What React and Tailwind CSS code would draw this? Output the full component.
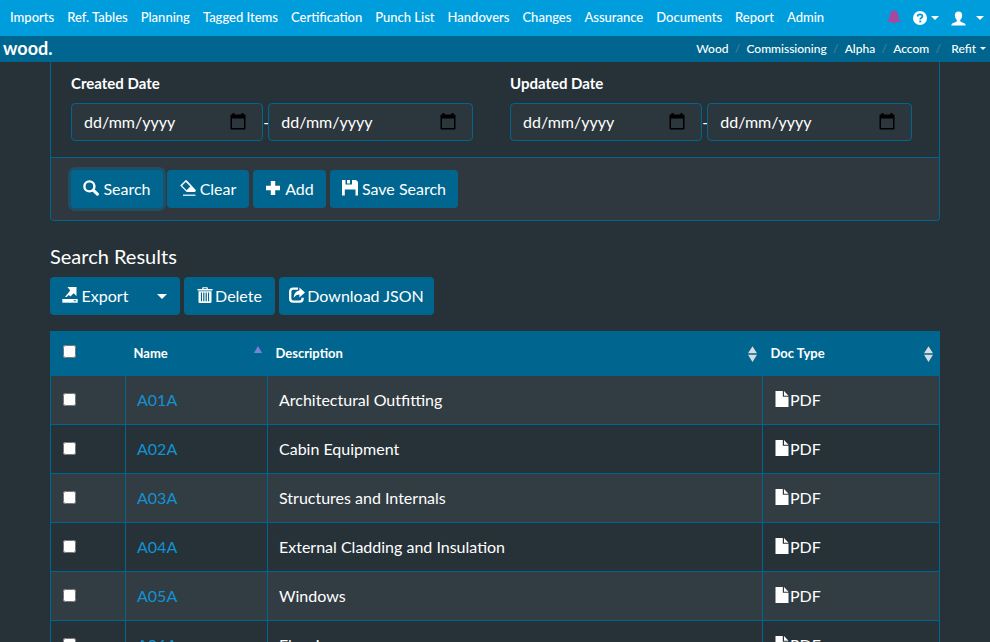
const menu = ['Imports', 'Ref. Tables', 'Planning', 'Tagged Items', 'Certification', 'Punch List', 'Handovers', 'Changes', 'Assurance', 'Documents', 'Report', 'Admin'];
const crumbs = ['Wood', 'Commissioning', 'Alpha', 'Accom'];
const rows = [
  ['A01A', 'Architectural Outfitting'],
  ['A02A', 'Cabin Equipment'],
  ['A03A', 'Structures and Internals'],
  ['A04A', 'External Cladding and Insulation'],
  ['A05A', 'Windows'],
  ['A06A', 'Flooring'],
];

function Icon({ children, className = 'size-4' }) {
  return (
    <svg viewBox="0 0 16 16" fill="currentColor" aria-hidden="true" className={`shrink-0 ${className}`}>
      {children}
    </svg>
  );
}

const SearchIcon = () => (
  <Icon className="size-4 -translate-y-px">
    <circle cx="6.4" cy="6.4" r="5" fill="none" stroke="currentColor" strokeWidth="2.4" />
    <path d="M10.2 10.2L14.4 14.2" stroke="currentColor" strokeWidth="3" strokeLinecap="round" />
  </Icon>
);
const EraserIcon = () => (
  <Icon className="size-4 -translate-y-px">
    <path d="M5.500.200L.200 5.500l6.500 6.500H14.400Q16.600 11.700 15.500 9.700L6.900.500Q6.200-.300 5.500.200zM5.800 1.900L10.300 6.400 6.600 10.200 2.100 5.700z" fillRule="evenodd" />
    <path d="M3 14.600h12.500v1.200H3z" />
  </Icon>
);
const PlusIcon = () => (
  <Icon className="size-4 -translate-y-px">
    <path d="M5.800 1h4.400v4.800H15v4.400h-4.800V15H5.800v-4.800H1V5.800h4.800z" />
  </Icon>
);
const SaveIcon = () => (
  <Icon className="size-4 -translate-y-px">
    <path d="M0 0H3.500V5H12V0H14L16 2V15.500H13.500V9H2.800V15.500H0z" />
    <path d="M5 0H8V3.500H5zM10 0H12.500V5H10zM2 4.500H14V9.500H2z" />
  </Icon>
);
const ExportIcon = () => (
  <Icon className="size-4 -translate-y-px">
    <path d="M5.500 0h9V8.900l-2.900-2.600-3.100 3.300-1.800-1.700-2 2H3L8.200 3.500z" />
    <path d="M.3 12h15.400v3.700H.3z" />
    <path d="M11.800 13.200h2v1h-2z" fill="#00668f" />
  </Icon>
);
const TrashIcon = () => (
  <Icon className="h-[18px] w-4 -translate-y-px">
    <path d="M5.200 2V.800Q5.200.200 5.800.200h4.400q.6 0 .6.600V2H15.500v1.500H.5V2zM6.500 2h3V1.200h-3z" fillRule="evenodd" />
    <path d="M1.500 4.300h13V14.800q0 1.200-1.200 1.200H2.700q-1.200 0-1.200-1.200zM3.900 5.600v8.700h1.100V5.600zM6.200 5.600v8.700h1.200V5.600zM8.600 5.600v8.700h1.200V5.600zM11 5.600v8.700h1.100V5.600z" fillRule="evenodd" />
  </Icon>
);
const ShareIcon = () => (
  <Icon className="size-4 -translate-y-px">
    <path d="M9 1.600H4.300Q1.200 1.600 1.200 4.800v6.700q0 3.200 3.100 3.200h6.300q3 0 3-3.200V10.700" fill="none" stroke="currentColor" strokeWidth="2.300" />
    <path d="M10.400.600L16 5.600l-5.600 4.800V7.600Q6.900 7.500 4.700 10.700 5 4.300 10.400 3.500z" />
  </Icon>
);
const FileIcon = () => (
  <Icon className="size-4 -translate-y-px">
    <path d="M1.500 0H8.800V5.800H14.500V16H1.500zM10 0L14.500 4.700H10z" />
  </Icon>
);
const BellIcon = () => (
  <Icon className="size-[14px]">
    <path d="M8 0Q9.300 0 9.400 1.500 12.600 2.500 12.800 6.500 12.900 10.500 15.700 13v.800H.3V13Q3.100 10.500 3.200 6.500 3.400 2.500 6.600 1.500 6.700 0 8 0zM6 14.400h4Q9.400 16 8 16T6 14.400z" />
  </Icon>
);
const HelpIcon = () => (
  <Icon className="size-[14px]">
    <circle cx="8" cy="8" r="8" />
    <path d="M5.300 6.300Q5.300 3.900 8 3.900T10.700 6.100Q10.700 7.400 9.200 8.100 8.300 8.600 8.300 9.800" fill="none" stroke="#009ddc" strokeWidth="2" />
    <path d="M7.200 10.900h2.200V13H7.200z" fill="#009ddc" />
  </Icon>
);
const UserIcon = () => (
  <Icon className="size-[15px]">
    <path d="M8 .5Q11.900.5 11.900 4.700 11.800 8.200 9.800 9.700V11Q11 12 13.800 12.800 15.700 13.500 15.700 15.500H.3Q.3 13.500 2.200 12.800 5 12 6.200 11V9.700Q4.200 8.200 4.100 4.700 4.100.500 8 .500z" />
  </Icon>
);
const CalendarIcon = () => (
  <svg viewBox="0 0 16 17" aria-hidden="true" className="h-[17px] w-4" fill="#000">
    <path d="M2.500 0h2v1.500h7V0h2v1.500H14.500Q15.500 1.500 15.500 2.500V15.500Q15.500 16.500 14.500 16.500H1.500Q.5 16.500.5 15.500V2.500Q.5 1.500 1.500 1.500H2.500zM2 5.500V15H14V5.500z" fillRule="evenodd" />
  </svg>
);
const Caret = ({ className = 'w-2.5' }) => (
  <svg viewBox="0 0 10 5" fill="currentColor" aria-hidden="true" className={`shrink-0 ${className}`}>
    <path d="M0 0h10L5 5z" />
  </svg>
);
const SortIcon = () => (
  <svg viewBox="0 0 8 14" fill="#d6dce0" aria-hidden="true" className="h-4 w-[9px]">
    <path d="M4 0l4 6.400H0zM0 7.600h8L4 14z" />
  </svg>
);

function Button({ children, className = '' }) {
  return (
    <button type="button" className={`flex h-[38px] items-center justify-center rounded bg-[#00668f] ${className}`}>
      {children}
    </button>
  );
}

function DateField({ label, className }) {
  return (
    <span className={`flex h-[38px] items-center rounded border border-[#00668f] bg-[#2b373d] pl-3 ${className}`}>
      <input type="text" aria-label={label} placeholder="dd/mm/yyyy" className="w-full min-w-0 bg-transparent outline-none placeholder:text-white" />
      <button type="button" aria-label={`Choose ${label}`} className="shrink-0 pb-0.5">
        <CalendarIcon />
      </button>
    </span>
  );
}

function DateRange({ title }) {
  return (
    <fieldset className="min-w-0 flex-1 px-[15px]">
      <legend className="mb-2 font-bold leading-6 text-[15px]">{title}</legend>
      <div className="flex items-center">
        <DateField label={`${title} from`} className="w-[47%] pr-4" />
        <span className="w-[5px] text-center">-</span>
        <DateField label={`${title} to`} className="w-[50%] pr-4" />
      </div>
    </fieldset>
  );
}

export default function App() {
  return (
    <div className="h-screen overflow-hidden bg-[#263238] font-['Lato',sans-serif] text-base text-white">
      <header>
        <nav className="flex h-9 items-center justify-between bg-[#009ddc] pl-2.5 pr-1.5 text-[13px] font-medium">
          <div className="flex gap-[13px]">
            {menu.map((m) => (
              <a key={m} href="#" className="whitespace-nowrap">{m}</a>
            ))}
          </div>
          <div className="flex items-center">
            <button type="button" aria-label="Notifications" className="mr-3 pb-0.5 text-[#a8479c]"><BellIcon /></button>
            <button type="button" aria-label="Help" className="mr-3 flex items-center gap-1"><HelpIcon /><Caret className="w-2" /></button>
            <button type="button" aria-label="Account" className="flex items-center gap-2.5"><UserIcon /><Caret className="w-2" /></button>
          </div>
        </nav>
        <div className="flex h-[26px] items-center justify-between bg-[#00668f] pl-[3px] pr-1">
          <a href="#" className="pb-0.5 text-lg font-bold leading-5">wood.</a>
          <div className="flex items-center text-xs font-medium">
            {crumbs.map((c) => (
              <span key={c} className="flex">
                <a href="#">{c}</a>
                <span className="w-[18px] text-center font-normal text-[#5c7f8f]">/</span>
              </span>
            ))}
            <button type="button" className="ml-1 flex items-center gap-1">Refit <Caret className="mb-0.5 w-1.5" /></button>
          </div>
        </div>
      </header>

      <main className="px-[50px]">
        <section className="rounded-b border border-t-0 border-[#00668f]">
          <div className="flex px-[5px] pb-4 pt-[9px]">
            <DateRange title="Created Date" />
            <DateRange title="Updated Date" />
          </div>
          <div className="flex gap-1 rounded-b border-t border-[#00668f] bg-[#2e383e] px-5 py-3">
            <Button className="w-[92px] gap-1 ring-3 ring-[#1d4f66]"><SearchIcon />Search</Button>
            <Button className="w-[82px] gap-1"><EraserIcon />Clear</Button>
            <Button className="w-[73px] gap-1"><PlusIcon />Add</Button>
            <Button className="w-32 gap-1"><SaveIcon />Save Search</Button>
          </div>
        </section>

        <h2 className="mt-6 text-xl leading-[22px]">Search Results</h2>
        <div className="mt-2.5 flex gap-1">
          <div className="flex w-[130px]">
            <Button className="flex-1 gap-1 rounded-r-none pr-1"><ExportIcon />Export</Button>
            <button type="button" aria-label="Export options" className="flex w-9 items-center justify-center rounded-r bg-[#00668f]"><Caret /></button>
          </div>
          <Button className="w-[91px] gap-0.5"><TrashIcon />Delete</Button>
          <Button className="w-[155px] gap-0.5"><ShareIcon />Download JSON</Button>
        </div>

        <table className="mt-4 w-full table-fixed border-collapse border border-[#00668f]">
          <colgroup>
            <col className="w-[75px]" />
            <col className="w-[142px]" />
            <col />
            <col className="w-[177px]" />
          </colgroup>
          <thead className="bg-[#00668f] text-left text-[13px]">
            <tr className="h-11">
              <th className="pl-3"><input type="checkbox" aria-label="Select all" className="mb-1 block size-[13px]" /></th>
              <th className="pl-2 pr-1.5">
                <div className="flex items-center justify-between">Name
                  <svg viewBox="0 0 8 7" aria-hidden="true" className="mb-2 w-2" fill="#7f7fdb"><path d="M4 0l4 7H0z" /></svg>
                </div>
              </th>
              <th className="pl-2 pr-1.5"><div className="flex items-center justify-between">Description<SortIcon /></div></th>
              <th className="pl-2 pr-1.5"><div className="flex items-center justify-between">Doc Type<SortIcon /></div></th>
            </tr>
          </thead>
          <tbody>
            {rows.map(([code, text]) => (
              <tr key={code} className="h-[49px] odd:bg-[#323c43]">
                <td className="border border-[#00668f] pl-3"><input type="checkbox" aria-label={`Select ${code}`} className="mb-0.5 block size-[13px]" /></td>
                <td className="border border-[#00668f] px-[11px]"><a href="#" className="text-[#1292d2]">{code}</a></td>
                <td className="border border-[#00668f] px-[11px]">{text}</td>
                <td className="border border-[#00668f] px-[11px]"><span className="flex items-center"><FileIcon />PDF</span></td>
              </tr>
            ))}
          </tbody>
        </table>
      </main>
    </div>
  );
}
